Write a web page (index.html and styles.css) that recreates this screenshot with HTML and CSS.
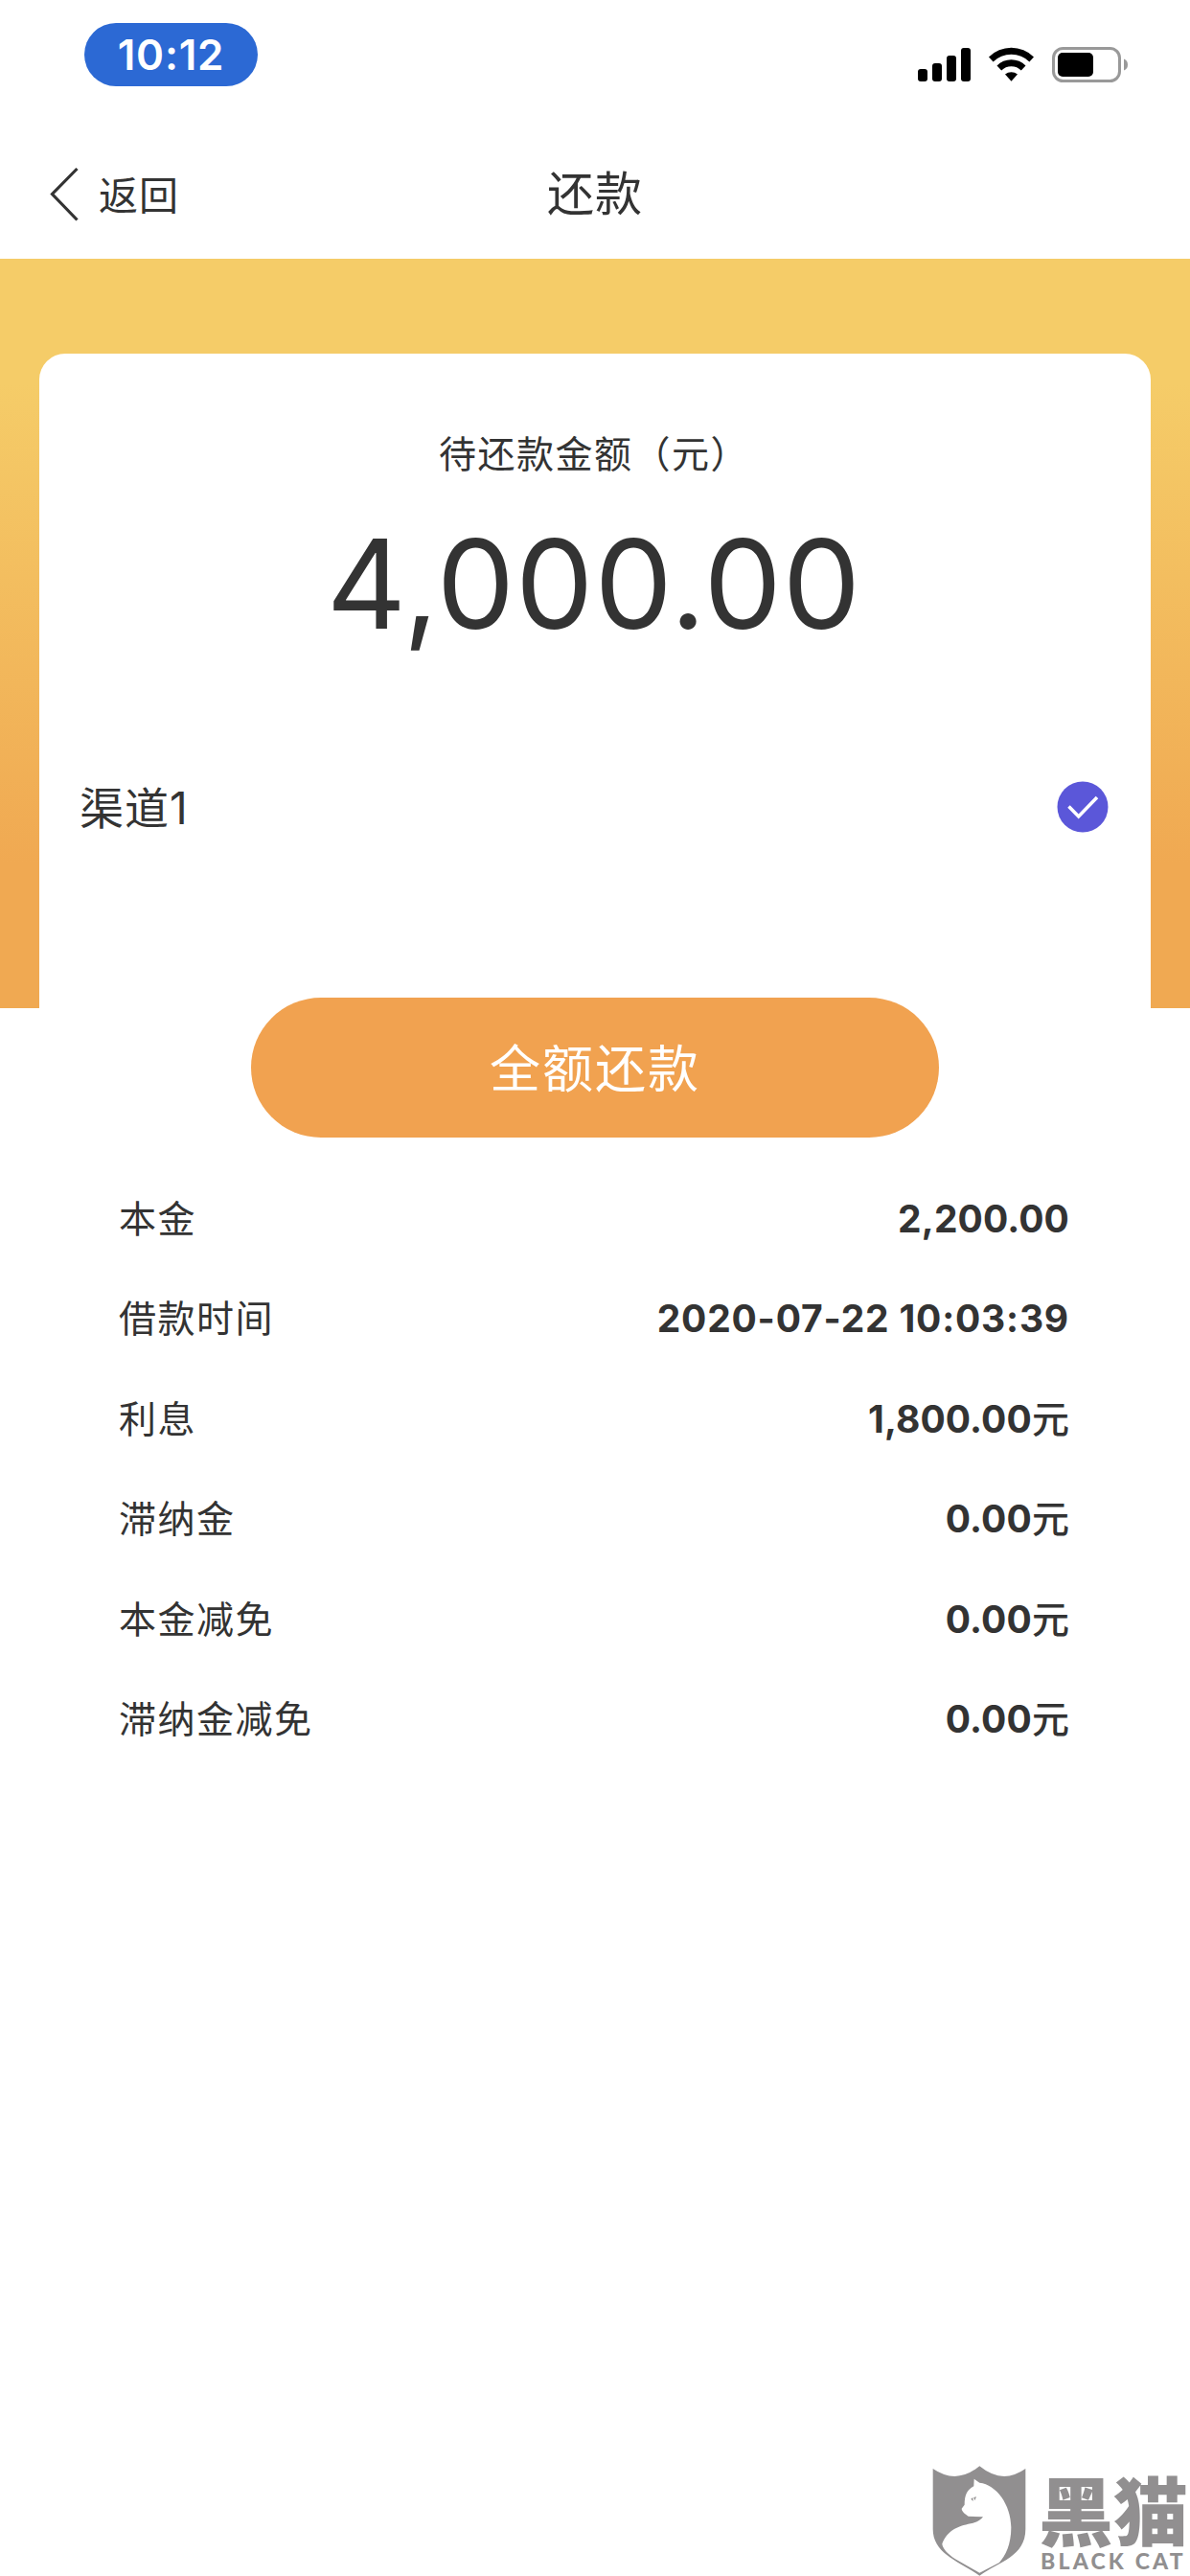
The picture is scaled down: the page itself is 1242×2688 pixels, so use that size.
FILE: index.html
```html
<!DOCTYPE html>
<html lang="zh-CN">
<head>
    <meta charset="UTF-8">
    <meta name="viewport" content="width=device-width, initial-scale=1.0">
    <title>还款</title>
    <link rel="stylesheet" href="styles.css">
</head>
<body>
    <div class="status-bar">
        <div class="time">10:12</div>
        <svg class="status-icons" width="222" height="40" viewBox="0 0 222 40">
            <rect x="0" y="25" width="10" height="13" rx="3"/>
            <rect x="15" y="19" width="10" height="19" rx="3"/>
            <rect x="30" y="11" width="10" height="27" rx="3"/>
            <rect x="45" y="3" width="10" height="35" rx="3"/>
            <path d="M74 12.500a33.500 33.500 0 0 1 47 0l-4.600 5a27 27 0 0 0-37.800 0z"/>
            <path d="M82.500 21.500a21 21 0 0 1 30 0l-4.700 5a14.500 14.500 0 0 0-20.600 0z"/>
            <path d="M91 30.500a10.500 10.500 0 0 1 13 0l-6.500 7.200z"/>
            <rect class="battery" x="141.500" y="3.500" width="69" height="34" rx="10"/>
            <rect x="146" y="8" width="37" height="25" rx="5"/>
            <path class="nub" d="M215 14.500q4 1.500 4 6t-4 6z"/>
        </svg>
    </div>

    <div class="nav">
        <a class="back">
            <svg width="32" height="58" viewBox="0 0 32 58"><path d="M29.500 2L3.500 28.500l26 27"/></svg>
            <span>返回</span>
        </a>
        <h1>还款</h1>
    </div>

    <div class="band">
        <div class="card">
            <p class="card-label">待还款金额（元）</p>
            <p class="amount">4,000.00</p>
            <div class="channel">
                <span>渠道1</span>
                <svg width="54" height="54" viewBox="0 0 54 54">
                    <circle cx="27" cy="27" r="26.500"/>
                    <path d="M12.500 26.500L22.700 37 42 17"/>
                </svg>
            </div>
        </div>
    </div>

    <button type="button" class="pay-button">全额还款</button>

    <div class="details">
        <div class="row"><span>本金</span><b>2,200.00</b></div>
        <div class="row"><span>借款时间</span><b class="date">2020-07-22 10:03:39</b></div>
        <div class="row"><span>利息</span><b>1,800.00<i>元</i></b></div>
        <div class="row"><span>滞纳金</span><b>0.00<i>元</i></b></div>
        <div class="row"><span>本金减免</span><b>0.00<i>元</i></b></div>
        <div class="row"><span>滞纳金减免</span><b>0.00<i>元</i></b></div>
    </div>

    <div class="brand">
        <svg width="98" height="115" viewBox="98 98 294 345">
            <path class="shield" d="M100 107Q174 158 246 99Q318 158 390 107V296C390 382 309 397 246 442C183 397 100 374 100 296Z"/>
            <path class="cat" d="M229 139L246 151C299 157 344 219 345 291C345 345 327 380 308 401L246 433L170 390C145 374 129 355 129 342C146 296 185 285 226 277Q247 272 257 258L211 256C200 248 191 242 190 232L199 220C199 190 207 173 228 162Z"/>
            <path class="eye" d="M219 202L226 209L225 197ZM228 197L236 195L231 207Z"/>
        </svg>
        <div class="brand-text">
            <div class="brand-name">黑猫</div>
            <div class="brand-en">BLACK CAT</div>
        </div>
    </div>
</body>
</html>
```

FILE: styles.css
```css
* {
    box-sizing: border-box;
    margin: 0;
    padding: 0;
}

body {
    display: flex;
    flex-direction: column;
    width: 1242px;
    height: 2688px;
    overflow: hidden;
    background-color: #fff;
    color: #333;
    font-family: Inter, "Noto Sans CJK SC", sans-serif;
}

.status-bar {
    display: flex;
    justify-content: space-between;
    align-items: flex-start;
    height: 136px;
    padding: 24px 62px 0 88px;
}

.time {
    width: 181px;
    height: 66px;
    border-radius: 33px;
    background-color: #2c69d4;
    color: #fff;
    font-size: 44px;
    font-weight: 600;
    line-height: 66px;
    letter-spacing: 0.8px;
    text-align: center;
}

.status-icons {
    margin-top: 23px;
}

.battery {
    fill: none;
    stroke: #999;
    stroke-width: 3;
}

.nub {
    fill: #999;
}

.nav {
    display: grid;
    grid-template-columns: 1fr auto 1fr;
    align-items: center;
    height: 134px;
    padding: 0 51px;
}

.back {
    display: flex;
    align-items: center;
    gap: 20px;
    font-size: 41px;
    letter-spacing: 1px;
}

.back span {
    padding-bottom: 4px;
}

.back path {
    fill: none;
    stroke: #333;
    stroke-width: 3.2;
}

.nav h1 {
    padding-bottom: 9px;
    font-size: 49px;
    font-weight: 400;
    letter-spacing: 1px;
}

.band {
    height: 782px;
    padding: 99px 41px 0;
    background: linear-gradient(#f5cc68 0, #f5cc68 130px, #f0a952 630px);
}

.card {
    height: 683px;
    padding: 75px 44px 0 42px;
    border-radius: 27px 27px 0 0;
    background-color: #fff;
}

.card-label {
    height: 60px;
    font-size: 39px;
    line-height: 60px;
    letter-spacing: 1.5px;
    text-align: center;
}

.amount {
    height: 160px;
    margin-top: 25px;
    font-size: 129px;
    line-height: 160px;
    letter-spacing: 1px;
    text-align: center;
}

.channel {
    display: flex;
    justify-content: space-between;
    align-items: center;
    height: 80px;
    margin-top: 113px;
    font-size: 46px;
    letter-spacing: 1px;
}

.channel span {
    padding-bottom: 5px;
}

.channel circle {
    fill: #5b57d9;
}

.channel path {
    fill: none;
    stroke: #fff;
    stroke-width: 3.5;
}

.pay-button {
    align-self: center;
    flex-shrink: 0;
    width: 718px;
    height: 146px;
    margin-top: -11px;
    padding-bottom: 5px;
    border: none;
    border-radius: 73px;
    background-color: #f1a250;
    color: #fff;
    font-family: inherit;
    font-size: 53px;
    letter-spacing: 2px;
}

.details {
    padding: 33px 126px 0 124px;
}

.row {
    display: flex;
    justify-content: space-between;
    height: 104.4px;
    font-size: 39px;
    line-height: 104.4px;
}

.row span {
    letter-spacing: 1.5px;
}

.row b {
    font-weight: 700;
    letter-spacing: 0.1px;
}

.row .date {
    letter-spacing: 0.8px;
}

.row i {
    font-style: normal;
    font-weight: 500;
}

.brand {
    display: flex;
    align-items: flex-end;
    align-self: flex-end;
    gap: 13px;
    margin-top: auto;
    padding-right: 1px;
    color: #918f90;
}

.shield,
.eye {
    fill: #918f90;
}

.cat {
    fill: #fff;
}

.brand-text {
    width: 157px;
    height: 108px;
    white-space: nowrap;
}

.brand-name {
    height: 75px;
    font-family: "Noto Sans CJK SC", sans-serif;
    font-size: 78px;
    font-weight: 900;
    line-height: 75px;
}

.brand-en {
    padding-left: 2px;
    font-family: Lato, sans-serif;
    font-size: 23px;
    font-weight: 900;
    line-height: 34px;
    letter-spacing: 3.2px;
}
```
